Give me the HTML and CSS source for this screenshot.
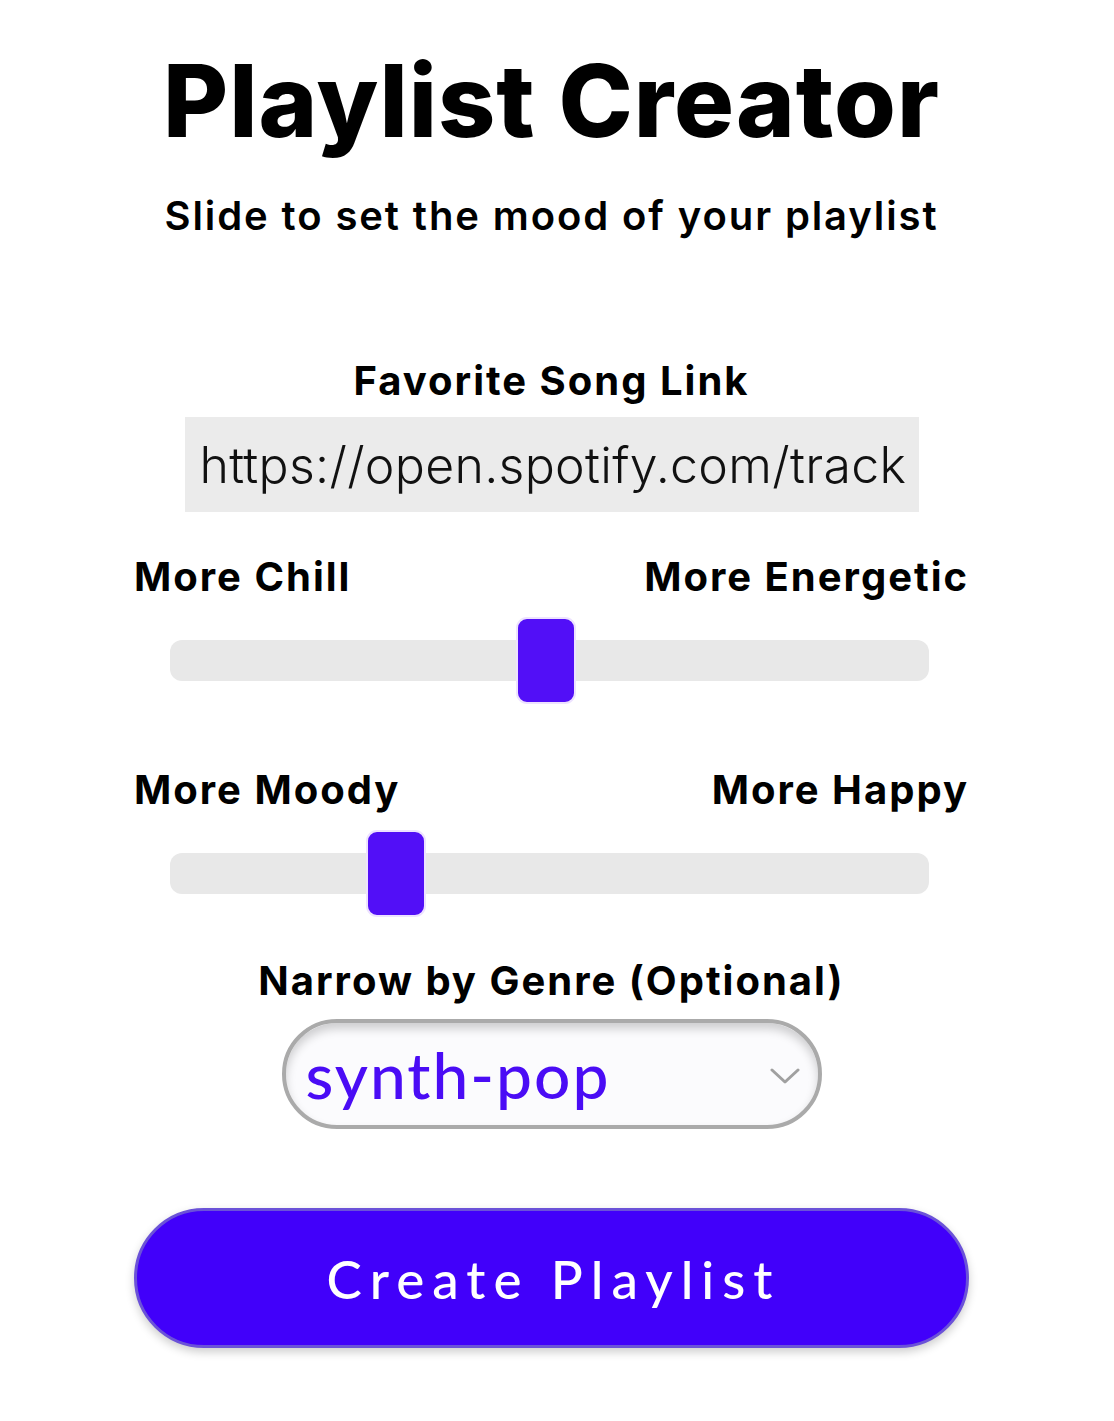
FILE: index.html
```html
<!DOCTYPE html>
<html lang="en">
<head>
  <meta charset="UTF-8">
  <meta name="viewport" content="width=device-width, initial-scale=1.0">
  <title>Playlist Creator</title>
  <link rel="stylesheet" href="styles.css">
</head>
<body>
  <div class="creator">
    <h1 class="title">Playlist Creator</h1>
    <p class="subtitle">Slide to set the mood of your playlist</p>

    <label class="field-label link-label" for="song-link">Favorite Song Link</label>
    <input class="song-link" id="song-link" type="text" value="https://open.spotify.com/track">

    <div class="mood">
      <div class="mood-labels">
        <span>More Chill</span>
        <span>More Energetic</span>
      </div>
      <input class="slider" type="range" min="0" max="100" step="0.5" value="49.5">
    </div>

    <div class="mood">
      <div class="mood-labels">
        <span>More Moody</span>
        <span>More Happy</span>
      </div>
      <input class="slider" type="range" min="0" max="100" step="0.5" value="28">
    </div>

    <label class="field-label genre-label" for="genre">Narrow by Genre (Optional)</label>
    <div class="genre-select">
      <select id="genre">
        <option>synth-pop</option>
        <option>indie</option>
        <option>house</option>
      </select>
      <svg class="chevron" width="30" height="16" viewBox="0 0 30 16">
        <path d="M2 2 L15 14 L28 2" fill="none" stroke="#a0a0a0" stroke-width="3" stroke-linecap="round" stroke-linejoin="round"/>
      </svg>
    </div>

    <button class="create-btn">Create Playlist</button>
  </div>
</body>
</html>
```

FILE: styles.css
```css
body {
  margin: 0;
  padding: 0 11px 0 0;
  background: #fff;
  color: #000;
  font-family: "Inter", "Open Sans", sans-serif;
}

.creator {
  width: 835px;
  margin: 0 auto;
  display: flex;
  flex-direction: column;
  align-items: center;
}

.title {
  margin: 41px 0 0;
  font-size: 100px;
  font-weight: 800;
  line-height: 120px;
  letter-spacing: 1px;
}

.subtitle {
  margin: 31px 0 0;
  font-size: 40px;
  font-weight: 600;
  line-height: 48px;
  letter-spacing: 1.9px;
}

.field-label {
  display: block;
  font-size: 40px;
  font-weight: 700;
  line-height: 48px;
  letter-spacing: 2px;
}

.link-label {
  margin-top: 117px;
}

.song-link {
  margin-top: 12px;
  width: 734px;
  height: 95px;
  box-sizing: border-box;
  padding: 0 10px 0 15px;
  border: none;
  background: #ebebeb;
  font-family: "Inter", sans-serif;
  font-size: 50px;
  font-weight: 300;
  letter-spacing: 0.3px;
  color: #111;
  outline: none;
}

.mood {
  width: 100%;
  margin-top: 41px;
}

.mood + .mood {
  margin-top: 85px;
}

.mood-labels {
  display: flex;
  justify-content: space-between;
  font-size: 40px;
  font-weight: 700;
  line-height: 48px;
  letter-spacing: 2px;
}

.slider {
  -webkit-appearance: none;
  appearance: none;
  display: block;
  width: 759px;
  height: 41px;
  margin: 39px 0 0 36px;
  background: #e8e8e8;
  border-radius: 12px;
  outline: none;
}

.slider::-webkit-slider-thumb {
  -webkit-appearance: none;
  width: 60px;
  height: 87px;
  box-sizing: border-box;
  background: #520ff7;
  border: 2px solid #ede2ff;
  border-radius: 11px;
}

.genre-label {
  margin-top: 63px;
}

.genre-select {
  position: relative;
  margin-top: 14px;
}

.genre-select select {
  -webkit-appearance: none;
  appearance: none;
  display: block;
  width: 540px;
  height: 110px;
  padding: 0 80px 0 20px;
  border: 4px solid #aaaaaa;
  border-radius: 55px;
  background: #fbfbfd;
  box-shadow: inset 0 6px 10px rgba(0, 0, 0, 0.18);
  font-family: "Lato", sans-serif;
  font-size: 64px;
  font-weight: 500;
  letter-spacing: 2px;
  color: #4a0cf5;
  outline: none;
}

.chevron {
  position: absolute;
  top: 49px;
  right: 22px;
}

.create-btn {
  margin: 79px 0 60px;
  width: 835px;
  height: 140px;
  padding: 0 0 0 4px;
  border: 3px solid #6b52d8;
  border-radius: 70px;
  background: #4100fa;
  color: #fff;
  font-family: "Lato", sans-serif;
  font-size: 53px;
  font-weight: 500;
  letter-spacing: 8px;
  box-shadow: 0 4px 10px rgba(0, 0, 0, 0.2);
  cursor: pointer;
}
```
